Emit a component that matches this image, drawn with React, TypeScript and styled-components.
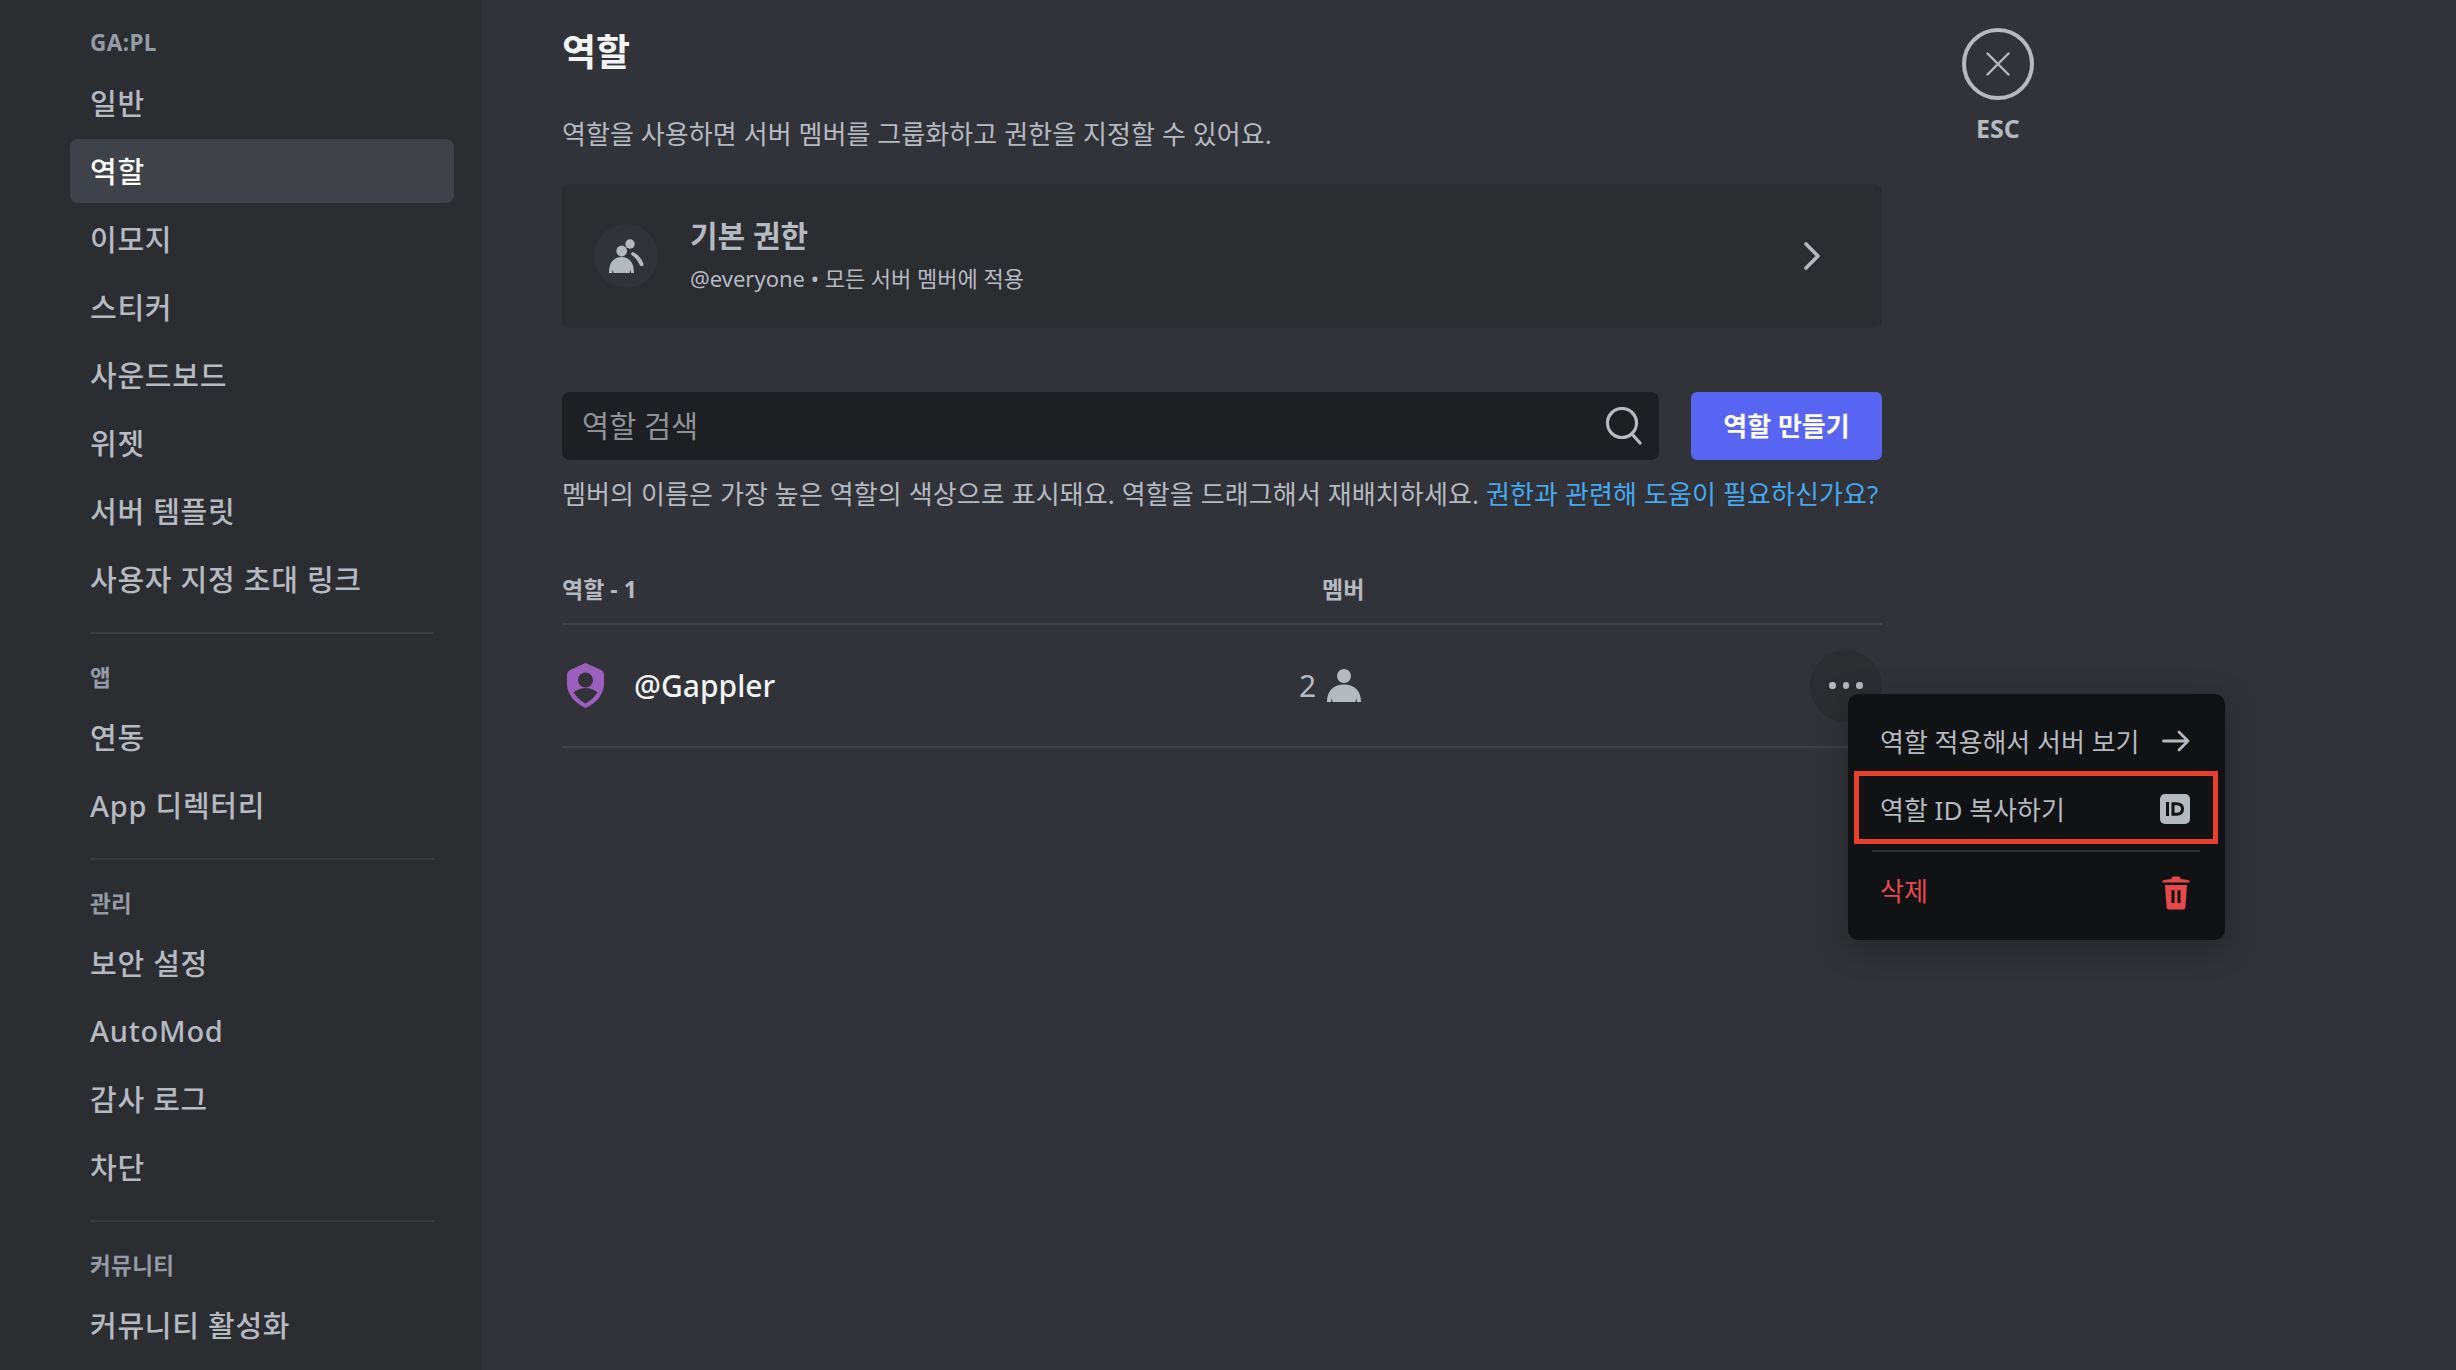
import React from "react";
import styled, { createGlobalStyle } from "styled-components";

const FONT = `"Noto Sans", "Noto Sans CJK KR", sans-serif`;

const Global = createGlobalStyle`
  html, body { margin: 0; padding: 0; background: #313338; }
  body { font-family: ${FONT}; }
  * { box-sizing: border-box; }
`;

const Page = styled.div`
  width: 2456px;
  height: 1370px;
  display: flex;
  overflow: hidden;
  background: #313338;
  color: #b5bac1;
`;

const Sidebar = styled.nav`
  width: 482px;
  height: 1370px;
  flex: none;
  overflow: hidden;
  background: #2b2d31;
  padding: 20px 28px 0 70px;
`;

const SectionHead = styled.div`
  height: 44px;
  margin-bottom: 7px;
  padding-left: 20px;
  display: flex;
  align-items: center;
  color: #949ba4;
  font-size: 22.5px;
  font-weight: 700;
  letter-spacing: 0.4px;
`;

const NavItem = styled.div<{ $active?: boolean }>`
  height: 64px;
  margin-bottom: 4px;
  padding: 0 0 2px 20px;
  display: flex;
  align-items: center;
  border-radius: 8px;
  font-size: 29px;
  font-weight: 500;
  letter-spacing: 0.75px;
  white-space: nowrap;
  color: ${(p) => (p.$active ? "#ffffff" : "#b5bac1")};
  background: ${(p) => (p.$active ? "#404249" : "transparent")};
`;

const NavDivider = styled.div`
  height: 2px;
  margin: 21px 20px 20px 20px;
  background: #3a3c42;
`;

const Main = styled.main`
  flex: 1;
  display: flex;
  padding-left: 80px;
  align-items: flex-start;
`;

const Content = styled.section`
  width: 1320px;
  position: relative;
`;

const Title = styled.h1`
  margin: 0;
  height: 99px;
  display: flex;
  align-items: center;
  color: #f2f3f5;
  font-size: 37px;
  font-weight: 700;
`;

const Subtitle = styled.p`
  margin: 0;
  height: 68px;
  display: flex;
  align-items: center;
  font-size: 26px;
  letter-spacing: 0.08px;
  color: #b5bac1;
  white-space: nowrap;
`;

const DefaultCard = styled.div`
  margin-top: 17px;
  height: 144px;
  padding: 0 30px 0 32px;
  display: flex;
  align-items: center;
  background: #2b2d31;
  border-radius: 8px;
`;

const CardIcon = styled.div`
  width: 64px;
  height: 64px;
  flex: none;
  border-radius: 50%;
  background: #313338;
  display: flex;
  align-items: center;
  justify-content: center;
`;

const CardText = styled.div`
  flex: 1;
  margin-left: 32px;
  padding-bottom: 2px;
  display: flex;
  flex-direction: column;
  gap: 6px;
`;

const CardTitle = styled.div`
  font-size: 30px;
  line-height: 40px;
  font-weight: 700;
  color: #b5bac1;
`;

const CardSub = styled.div`
  font-size: 22px;
  line-height: 32px;
  color: #b5bac1;
`;

const ChevronSlot = styled.div`
  width: 16px;
  margin-right: 32px;
  display: flex;
`;

const SearchRow = styled.div`
  margin-top: 64px;
  display: flex;
  gap: 32px;
`;

const SearchBox = styled.div`
  flex: 1;
  height: 68px;
  padding: 0 16px 0 20px;
  display: flex;
  align-items: center;
  justify-content: space-between;
  border-radius: 8px;
  background: #1e1f22;
  color: #8e9297;
  font-size: 29.5px;
`;

const SearchLabel = styled.span`
  padding-bottom: 3px;
`;

const CreateButton = styled.div`
  width: 191px;
  height: 68px;
  padding-bottom: 2px;
  display: flex;
  align-items: center;
  justify-content: center;
  border-radius: 6px;
  background: #5865f2;
  color: #ffffff;
  font-size: 26px;
  font-weight: 700;
`;

const Hint = styled.p`
  margin: 0;
  height: 66px;
  display: flex;
  align-items: center;
  gap: 7px;
  font-size: 26px;
  letter-spacing: 0.11px;
  white-space: nowrap;
`;

const HelpLink = styled.span`
  color: #46a8f0;
`;

const TableHead = styled.div`
  margin-top: 42px;
  height: 40px;
  display: flex;
  align-items: center;
  font-size: 23px;
  font-weight: 700;
  color: #b5bac1;
`;

const RoleHeadCell = styled.div`
  width: 760px;
`;

const HeadDivider = styled.div`
  margin-top: 15px;
  height: 2px;
  background: #3f4147;
`;

const RoleRow = styled.div`
  height: 123px;
  display: flex;
  align-items: center;
  border-bottom: 2px solid #3f4147;
`;

const RoleName = styled.div`
  width: 737px;
  display: flex;
  align-items: center;
  gap: 30px;
  padding-left: 5px;
  color: #f2f3f5;
  font-size: 30px;
  font-weight: 500;
`;

const MemberCount = styled.div`
  flex: 1;
  display: flex;
  align-items: center;
  gap: 10px;
  font-size: 30px;
  color: #b5bac1;
`;

const MoreButton = styled.div`
  width: 72px;
  height: 72px;
  border-radius: 50%;
  background: #2b2d31;
  display: flex;
  align-items: center;
  justify-content: center;
  gap: 7px;
`;

const Dot = styled.span`
  width: 6.5px;
  height: 6.5px;
  border-radius: 50%;
  background: #b5bac1;
`;

const Menu = styled.div`
  position: absolute;
  left: 1286px;
  top: 694px;
  width: 377px;
  height: 246px;
  padding: 19px 7px 0 6px;
  background: #111214;
  border-radius: 10px;
  box-shadow: 0 8px 32px rgba(0, 0, 0, 0.28);
`;

const MenuItem = styled.div<{ $danger?: boolean; $boxed?: boolean }>`
  height: ${(p) => (p.$boxed ? "73px" : "55px")};
  margin-bottom: ${(p) => (p.$boxed ? "0" : "3px")};
  padding: ${(p) => (p.$boxed ? "2px" : "0")} ${(p) => (p.$boxed ? "23px" : "28px")} 0 ${(p) => (p.$boxed ? "21px" : "26px")};
  display: flex;
  align-items: center;
  justify-content: space-between;
  font-size: 26px;
  color: ${(p) => (p.$danger ? "#e5484d" : "#b5bac1")};
  border: ${(p) => (p.$boxed ? "5px solid #e8402a" : "none")};
`;

const DangerLabel = styled.span`
  padding-bottom: 5px;
`;

const MenuDivider = styled.div`
  height: 2px;
  margin: 6px 18px 13px 18px;
  background: #2e3035;
`;

const CloseColumn = styled.aside`
  margin-left: 80px;
  padding-top: 28px;
  display: flex;
  flex-direction: column;
  align-items: center;
  width: 72px;
  color: #b5bac1;
`;

const CloseCircle = styled.div`
  width: 72px;
  height: 72px;
  flex: none;
  border-radius: 50%;
  border: 4px solid #b5bac1;
  display: flex;
  align-items: center;
  justify-content: center;
`;

const EscLabel = styled.div`
  margin-top: 11px;
  font-size: 25px;
  line-height: 34px;
  font-weight: 700;
`;

const People = () => (
  <svg width="40" height="40" viewBox="0 0 40 40" fill="#b5bac1">
    <circle cx="24" cy="8" r="4.700" />
    <circle cx="15.700" cy="15" r="5.400" />
    <path d="M3 37C3 26 8 21 15.500 21S28 26 28 37h-3l-.8-3.500-.6 3.500H7.400l-.6-3.500L6 37z" />
    <path d="M26 16C31 17 36 23 37.500 28C38 30 35 31 34 29.500C32 25 29 21 25.500 19C25 18 25 17 26 16Z" />
  </svg>
);

const Shield = () => (
  <svg width="37" height="45" viewBox="0 0 37 45" style={{ flex: "none" }}>
    <path fill="#9b5fc0" d="M18.500 0 L34 7 Q37 8.500 37 12 V21 C37 32 28 41 18.500 45 C9 41 0 32 0 21 V12 Q0 8.500 3 7 Z" />
    <circle cx="18.500" cy="17" r="7.500" fill="#313338" />
    <path fill="#313338" d="M6.500 29.500 C10 26.500 14 25 18.500 25 C23 25 27 26.500 30.500 29.500 C27 34.500 23 38 18.500 40.500 C14 38 10 34.500 6.500 29.500 Z" />
  </svg>
);

const Person = () => (
  <svg width="36" height="36" viewBox="0 0 36 36" fill="#b5bac1">
    <circle cx="18" cy="8" r="7" />
    <path d="M1 34C1 23 7 16.500 18 16.500S35 23 35 34h-4l-.8-4-.8 4H6.600l-.8-4-.8 4z" />
  </svg>
);

const Chevron = () => (
  <svg width="16" height="28" viewBox="0 0 16 28" fill="none" stroke="#b5bac1" strokeWidth="3.600" strokeLinecap="round" strokeLinejoin="round">
    <path d="M2 2 L14 14 L2 26" />
  </svg>
);

const SearchIcon = () => (
  <svg width="38" height="38" viewBox="0 0 38 38" fill="none" stroke="#b5bac1" strokeWidth="3.200" strokeLinecap="round">
    <circle cx="17" cy="16" r="14.500" />
    <path d="M27 27 L35 36" />
  </svg>
);

const XIcon = () => (
  <svg width="24" height="24" viewBox="0 0 24 24" fill="none" stroke="#b5bac1" strokeWidth="2.400" strokeLinecap="round">
    <path d="M1.500 1.500 L22.500 22.500 M22.500 1.500 L1.500 22.500" />
  </svg>
);

const ArrowIcon = () => (
  <svg width="28" height="22" viewBox="0 0 28 22" fill="none" stroke="#b5bac1" strokeWidth="2.800" strokeLinecap="round" strokeLinejoin="round">
    <path d="M1.500 11 H26 M17 2 L26 11 L17 20" />
  </svg>
);

const IdIcon = () => (
  <svg width="30" height="30" viewBox="0 0 30 30">
    <rect width="30" height="30" rx="5" fill="#b5bac1" />
    <path fill="none" stroke="#111214" strokeWidth="3" d="M7.500 8 V22 M13 9.800 H16.500 C20.500 9.800 22.500 12 22.500 15 C22.500 18 20.500 20.200 16.500 20.200 H13 Z" />
  </svg>
);

const TrashIcon = () => (
  <svg width="28" height="34" viewBox="0 0 28 34" fill="#e5484d">
    <path d="M9.500 3 Q9.500 .5 12 .5 H16 Q18.500 .5 18.500 3 L26 4 Q28 4.500 28 6.500 H0 Q0 4.500 2 4 Z" />
    <path fillRule="evenodd" d="M3 9 H25 L23.500 31 Q23.300 33.500 20.500 33.500 H7.500 Q4.700 33.500 4.500 31 Z M9.500 14 V27 H12.500 V14 Z M15.500 14 V27 H18.500 V14 Z" />
  </svg>
);

const navGroups: { head: string; items: string[] }[] = [
  { head: "GA:PL", items: ["일반", "역할", "이모지", "스티커", "사운드보드", "위젯", "서버 템플릿", "사용자 지정 초대 링크"] },
  { head: "앱", items: ["연동", "App 디렉터리"] },
  { head: "관리", items: ["보안 설정", "AutoMod", "감사 로그", "차단"] },
  { head: "커뮤니티", items: ["커뮤니티 활성화"] },
];

export default function App() {
  return (
    <Page>
      <Global />
      <Sidebar>
        {navGroups.map((g, i) => (
          <React.Fragment key={g.head}>
            {i > 0 && <NavDivider />}
            <SectionHead>{g.head}</SectionHead>
            {g.items.map((t) => (
              <NavItem key={t} $active={t === "역할"}>{t}</NavItem>
            ))}
          </React.Fragment>
        ))}
      </Sidebar>
      <Main>
        <Content>
          <Title>역할</Title>
          <Subtitle>역할을 사용하면 서버 멤버를 그룹화하고 권한을 지정할 수 있어요.</Subtitle>
          <DefaultCard>
            <CardIcon><People /></CardIcon>
            <CardText>
              <CardTitle>기본 권한</CardTitle>
              <CardSub>@everyone • 모든 서버 멤버에 적용</CardSub>
            </CardText>
            <ChevronSlot><Chevron /></ChevronSlot>
          </DefaultCard>
          <SearchRow>
            <SearchBox>
              <SearchLabel>역할 검색</SearchLabel>
              <SearchIcon />
            </SearchBox>
            <CreateButton>역할 만들기</CreateButton>
          </SearchRow>
          <Hint>
            멤버의 이름은 가장 높은 역할의 색상으로 표시돼요. 역할을 드래그해서 재배치하세요.
            <HelpLink>권한과 관련해 도움이 필요하신가요?</HelpLink>
          </Hint>
          <TableHead>
            <RoleHeadCell>역할 - 1</RoleHeadCell>
            <div>멤버</div>
          </TableHead>
          <HeadDivider />
          <RoleRow>
            <RoleName><Shield />@Gappler</RoleName>
            <MemberCount>2 <Person /></MemberCount>
            <MoreButton><Dot /><Dot /><Dot /></MoreButton>
          </RoleRow>
          <Menu>
            <MenuItem>역할 적용해서 서버 보기 <ArrowIcon /></MenuItem>
            <MenuItem $boxed>역할 ID 복사하기 <IdIcon /></MenuItem>
            <MenuDivider />
            <MenuItem $danger><DangerLabel>삭제</DangerLabel> <TrashIcon /></MenuItem>
          </Menu>
        </Content>
        <CloseColumn>
          <CloseCircle><XIcon /></CloseCircle>
          <EscLabel>ESC</EscLabel>
        </CloseColumn>
      </Main>
    </Page>
  );
}
